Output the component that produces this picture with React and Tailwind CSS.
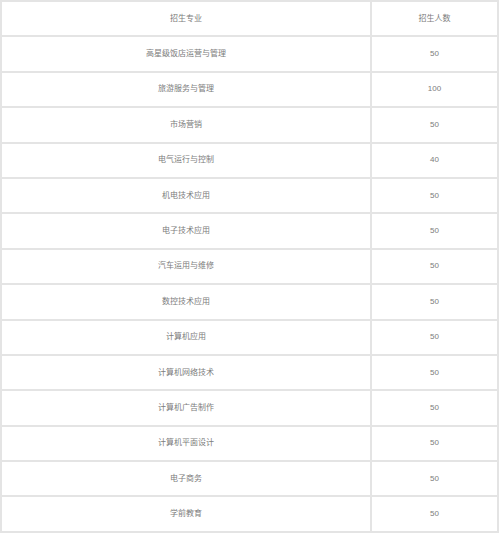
const rows = [
  ["高星级饭店运营与管理", "50"],
  ["旅游服务与管理", "100"],
  ["市场营销", "50"],
  ["电气运行与控制", "40"],
  ["机电技术应用", "50"],
  ["电子技术应用", "50"],
  ["汽车运用与维修", "50"],
  ["数控技术应用", "50"],
  ["计算机应用", "50"],
  ["计算机网络技术", "50"],
  ["计算机广告制作", "50"],
  ["计算机平面设计", "50"],
  ["电子商务", "50"],
  ["学前教育", "50"],
];

function Row({ name, count }) {
  return (
    <div className="flex h-[35.4px] border-b-2 border-[#e4e4e4]">
      <div className="flex w-[370px] items-center justify-center border-r-2 border-[#e4e4e4]">
        {name}
      </div>
      <div className="flex flex-1 items-center justify-center">{count}</div>
    </div>
  );
}

export default function App() {
  return (
    <div
      className="h-[534px] w-[500px] bg-white text-[8px] text-[#7c7c7c]"
      style={{ fontFamily: '"Liberation Sans", "Noto Sans CJK SC", sans-serif' }}
    >
      <div className="w-[499px] border-x-2 border-t-2 border-[#e4e4e4]">
        <Row name="招生专业" count="招生人数" />
        {rows.map(([name, count]) => (
          <Row key={name} name={name} count={count} />
        ))}
      </div>
    </div>
  );
}
